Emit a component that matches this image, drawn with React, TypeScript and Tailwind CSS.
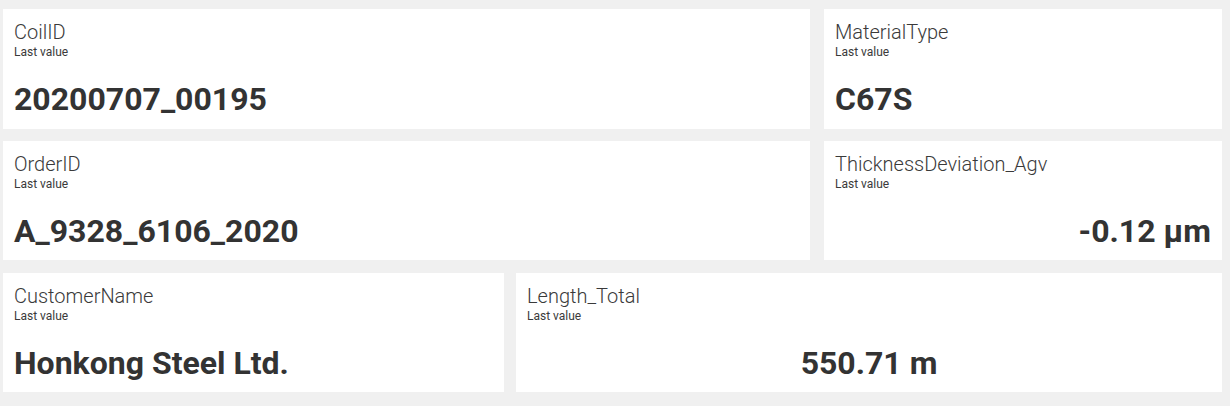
import React from "react";

type Align = "left" | "right" | "center";

const alignClass: Record<Align, string> = {
  left: "text-left",
  right: "text-right",
  center: "text-center",
};

const Card = ({
  title,
  value,
  align = "left",
  className = "",
}: {
  title: string;
  value: string;
  align?: Align;
  className?: string;
}) => {
  return (
    <div className={`bg-white flex flex-col px-[11px] pt-[13px] text-[#333333] ${className}`}>
      <div className="text-[20px] leading-[20px] font-light text-[#3a3a3a] whitespace-nowrap">{title}</div>
      <div className="mt-[4px] text-[12px] leading-[12px] text-[#3a3a3a]">Last value</div>
      <div
        className={`mt-[25px] text-[32px] leading-[33px] font-bold whitespace-nowrap ${alignClass[align]}`}
      >
        {value}
      </div>
    </div>
  );
};

export default function App() {
  return (
    <div
      className="w-[1230px] h-[406px] bg-[#f0f0f0] pl-[3px] pr-[8px] pt-[9px] flex flex-col"
      style={{ fontFamily: "Roboto, 'Open Sans', sans-serif" }}
    >
      <div className="flex gap-[14px] h-[120px]">
        <Card title="CoilID" value="20200707_00195" className="w-[807px]" />
        <Card title="MaterialType" value="C67S" className="flex-1" />
      </div>
      <div className="flex gap-[14px] h-[119px] mt-[12px]">
        <Card title="OrderID" value="A_9328_6106_2020" className="w-[807px]" />
        <Card title="ThicknessDeviation_Agv" value="-0.12 µm" align="right" className="flex-1" />
      </div>
      <div className="flex gap-[12px] h-[119px] mt-[13px]">
        <Card title="CustomerName" value="Honkong Steel Ltd." className="w-[501px]" />
        <Card title="Length_Total" value="550.71 m" align="center" className="flex-1" />
      </div>
    </div>
  );
}
